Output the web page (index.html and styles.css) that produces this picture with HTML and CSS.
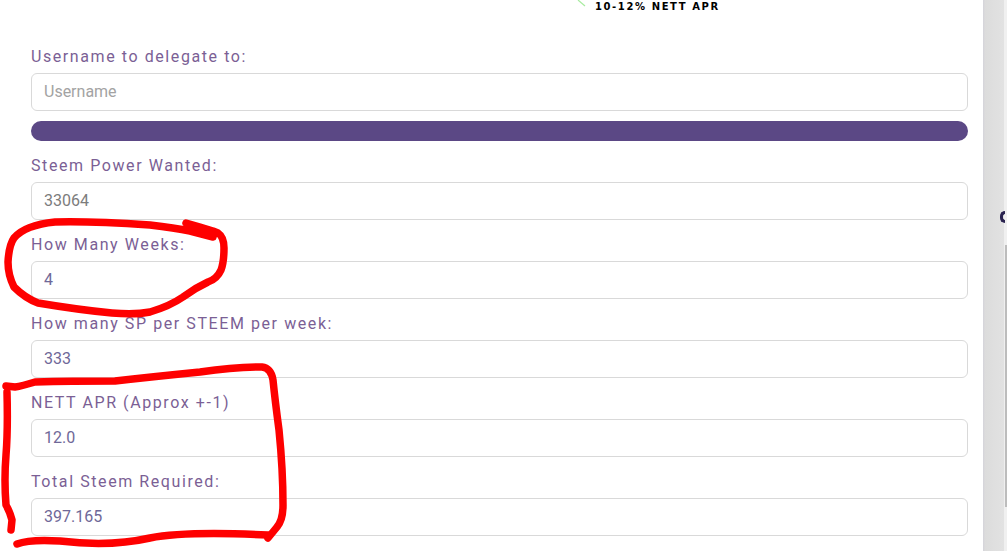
FILE: index.html
```html
<!DOCTYPE html>
<html lang="en">
<head>
<meta charset="utf-8">
<title>Delegate</title>
<link rel="stylesheet" href="styles.css">
</head>
<body>
<div class="page">
  <main class="main">
    <div class="banner">10-12% NETT APR</div>
    <form class="form">
      <label class="label" for="u">Username to delegate to:</label>
      <input class="field" id="u" placeholder="Username">
      <div class="bar"></div>
      <label class="label" for="sp">Steem Power Wanted:</label>
      <input class="field grey" id="sp" value="33064">
      <label class="label" for="w">How Many Weeks:</label>
      <input class="field" id="w" value="4">
      <label class="label" for="r">How many SP per STEEM per week:</label>
      <input class="field" id="r" value="333">
      <label class="label" for="a">NETT APR (Approx +-1)</label>
      <input class="field" id="a" value="12.0">
      <label class="label" for="t">Total Steem Required:</label>
      <input class="field" id="t" value="397.165">
    </form>
  </main>
  <aside class="side"><span class="side-glyph"></span><span class="side-thumb"></span></aside>
</div>
<svg class="ink" width="1007" height="551" viewBox="0 0 1007 551" fill="none">
  <path class="tick" d="M578 0L585 6"/>
  <g class="red">
    <path d="M186 223L200 227L213 231L218 233Q224 237 224 248Q224 262 221 270Q217 279 208 282Q195 288 183 297Q170 306 150 312Q135 315 112 313Q80 310 38 303Q25 298 14 287Q8 275 8 262Q9 245 14 238Q25 225 55 222Q90 221 150 225Q175 228 190 231L213 237"/>
    <path d="M6 386L15 387Q22 386 35 382Q70 381 115 381Q150 377 200 372Q235 367 262 367Q271 368 273 380Q275 400 279 430Q283 470 283 505Q283 520 277 527L268 538"/>
    <path d="M7 392Q8 430 6 455Q4 480 6 505Q10 512 12 520L11 530"/>
    <path d="M17 544Q30 539 60 541Q110 547 150 538Q185 531 268 535"/>
  </g>
</svg>
</body>
</html>
```
FILE: styles.css
```css
* { box-sizing: border-box; }
html, body { margin: 0; height: 100%; overflow: hidden; background: #fff; }
.page { display: flex; height: 551px; width: 1007px; }
.main { width: 983px; padding: 0 15px 0 31px; }
.banner {
  height: 38px;
  padding: 0 0 0 564px;
  font: bold 10px/14px "DejaVu Sans", sans-serif;
  letter-spacing: 1.6px;
  color: #000;
}
.form { display: flex; flex-direction: column; }
.label {
  font: 16px/19px Roboto, sans-serif;
  letter-spacing: 1.58px;
  color: #7b5f95;
  height: 35px;
  padding-top: 9px;
}
.field {
  display: block;
  width: 100%;
  height: 38px;
  margin-bottom: 6px;
  padding: 0 12px 2px;
  border: 1px solid #d9d9d9;
  border-radius: 6px;
  background: #fff;
  font: 16px Roboto, sans-serif;
  color: #6f6898;
  outline: 0;
}
.field::placeholder { color: #a3a3a3; opacity: 1; }
.field.grey { color: #7c7c7c; }
.bar {
  height: 20px;
  margin: 4px 0 6px;
  border-radius: 10px;
  background: #5b4885;
}
.side {
  width: 24px;
  position: relative;
  background: linear-gradient(90deg, #d4d3da 0, #dcdcdc 2px, #e2e2e2 21px, #f0f0f0 21px);
}
.side-glyph {
  position: absolute;
  left: 17px;
  top: 211px;
  width: 5px;
  height: 12px;
  border: 3px solid #2a2350;
  border-right: 0;
  border-radius: 5px 0 0 5px;
}
.side-thumb {
  position: absolute;
  left: 22px;
  top: 245px;
  width: 2px;
  height: 262px;
  background: #bdbdbd;
}
.ink { position: absolute; left: 0; top: 0; pointer-events: none; }
.tick { stroke: #a8eba0; stroke-width: 1.2; }
.red path { stroke: #fe0000; stroke-width: 7.5; stroke-linecap: round; stroke-linejoin: round; }
```
